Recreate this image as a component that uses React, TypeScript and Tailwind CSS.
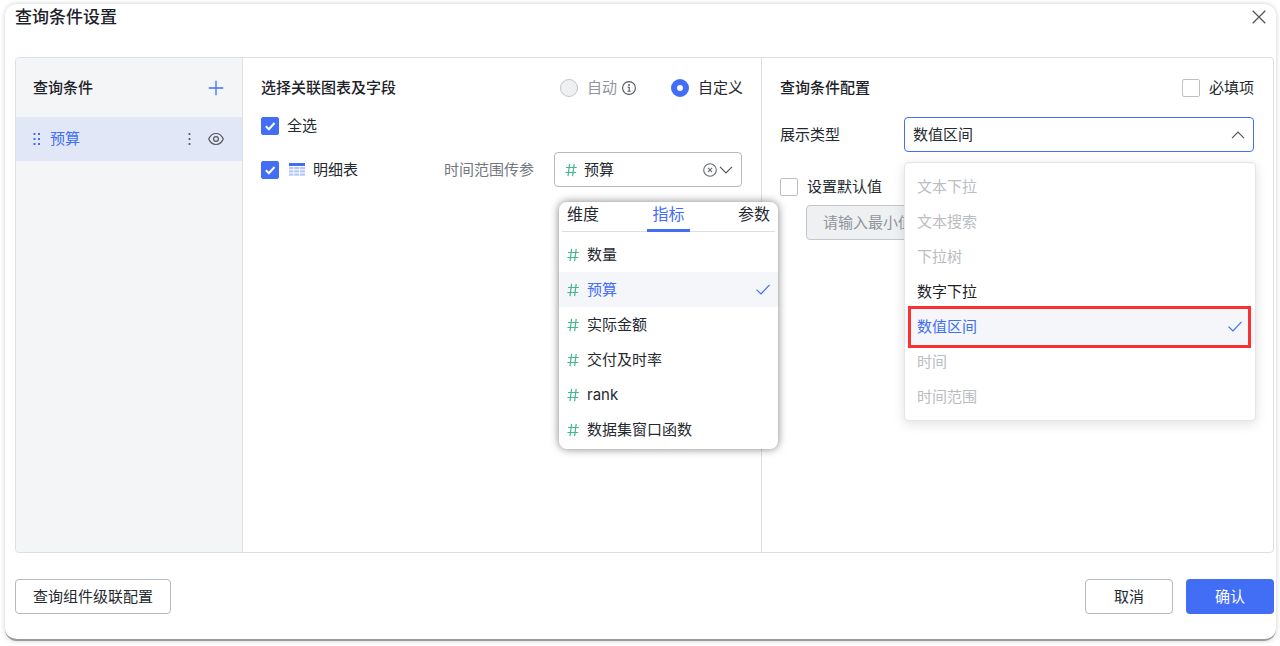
import { useState } from "react"

const typeOptions = [
    { label: "文本下拉", disabled: true },
    { label: "文本搜索", disabled: true },
    { label: "下拉树", disabled: true },
    { label: "数字下拉", disabled: false },
    { label: "数值区间", disabled: false },
    { label: "时间", disabled: true },
    { label: "时间范围", disabled: true },
]

const fields = ["数量", "预算", "实际金额", "交付及时率", "rank", "数据集窗口函数"]
const tabs = ["维度", "指标", "参数"]

function HashIcon() {
    return (
        <svg className="w-3 h-[14px] shrink-0" viewBox="0 0 12 14" fill="none" stroke="#45b594" strokeWidth="1.2">
            <path d="M4.6 .8 3 13.2M9.200 .8 7.600 13.2M1 4.500h10.800M.4 9.500h10.800" />
        </svg>
    )
}

function TickIcon() {
    return (
        <svg className="w-[14px] h-[11px] shrink-0" viewBox="0 0 14 11" fill="none" stroke="#426ef5" strokeWidth="1.2">
            <path d="M.5 5.6 5 10 13.5.8" />
        </svg>
    )
}

function Chevron({ up = false }) {
    return (
        <svg className="w-[14px] h-2" viewBox="0 0 14 8" fill="none" stroke="#51565d" strokeWidth="1.2">
            <path d={up ? "M1 7.2 7 1.2l6 6" : "M1 .8l6 6 6-6"} />
        </svg>
    )
}

function Checkbox({ id, checked = false }) {
    return (
        <span className="relative block w-[18px] h-[18px] shrink-0">
            <input
                id={id}
                type="checkbox"
                defaultChecked={checked}
                className="peer block appearance-none w-full h-full rounded-xs border border-[#bcbfc4] bg-white checked:border-[#426ef5] checked:bg-[#426ef5]"
            />
            <svg className="absolute inset-0 pointer-events-none opacity-0 peer-checked:opacity-100" viewBox="0 0 18 18" fill="none" stroke="#fff" strokeWidth="2">
                <path d="M4.8 9.2 7.9 12.2 13.5 6" />
            </svg>
        </span>
    )
}

export default function App() {
    const [mode, setMode] = useState("custom")
    const [tab, setTab] = useState("指标")
    const [field, setField] = useState("预算")
    const [type, setType] = useState("数值区间")

    const fieldRows = fields.map((name) => (
        <li key={name}>
            <button
                onClick={() => setField(name)}
                className={`flex items-center gap-2 w-full h-[35px] px-2 text-left ${name === field ? "bg-[#f4f6fa] text-[#426ef5]" : ""}`}
            >
                <HashIcon />
                <span className="flex-1">{name}</span>
                {name === field && <TickIcon />}
            </button>
        </li>
    ))

    const typeRows = typeOptions.map(({ label, disabled }) => (
        <li key={label} className="relative">
            <button
                disabled={disabled}
                onClick={() => setType(label)}
                className={`flex items-center justify-between w-full h-[35px] pl-3 pr-[13px] disabled:text-[#babdc2] ${label === type ? "bg-[#f4f6fa] text-[#426ef5]" : "text-[#1d2129]"}`}
            >
                {label}
                {label === type && <TickIcon />}
            </button>
            {label === "数值区间" && (
                <span className="absolute -top-[3px] -bottom-1 left-[3px] right-1 border-3 border-[#fb3030] pointer-events-none" />
            )}
        </li>
    ))

    return (
        <div className="bg-white pt-1 pb-1 pl-[5px] pr-1 font-['Inter','Noto_Sans_CJK_SC',sans-serif] text-[15px] leading-6 text-[#24292f]">
            <div className="flex flex-col rounded-xl border-b-2 border-[#9a9a9a] bg-white pl-[10px] pr-[2px] pb-[25px] shadow-[0_0_5px_rgba(0,0,0,0.2)]">
                <header className="flex items-center justify-between h-[26px] pr-2">
                    <h1 className="text-[17px] font-medium text-[#1d2129]">查询条件设置</h1>
                    <button aria-label="关闭">
                        <svg className="w-[14px] h-[14px]" viewBox="0 0 14 14" fill="none" stroke="#51565d" strokeWidth="1.3">
                            <path d="M.7.7l12.6 12.6M13.3.7.7 13.3" />
                        </svg>
                    </button>
                </header>

                <main className="flex mt-[27px] min-h-[496px] rounded-sm border border-[#dddfe3]">
                    {/* condition list */}
                    <aside className="w-[227px] shrink-0 rounded-l-sm border-r border-[#dddfe3] bg-[#f4f5f7]">
                        <div className="flex items-center justify-between h-[59px] pl-[17px] pr-[18px]">
                            <h2 className="font-medium text-[#1d2129]">查询条件</h2>
                            <button aria-label="添加">
                                <svg className="w-4 h-4" viewBox="0 0 16 16" fill="none" stroke="#426ef5" strokeWidth="1.3">
                                    <path d="M8 .7v14.6M.7 8h14.6" />
                                </svg>
                            </button>
                        </div>
                        <div className="flex items-center h-[44px] pl-[17px] pr-[18px] bg-[#e1e7f6] text-[#426ef5]">
                            <svg className="w-2 h-3" viewBox="0 0 8 12" fill="#426ef5">
                                {[0, 5, 10].map((y) => (
                                    <g key={y}>
                                        <rect x=".5" y={y} width="2" height="2" />
                                        <rect x="5" y={y} width="2" height="2" />
                                    </g>
                                ))}
                            </svg>
                            <span className="flex-1 pl-[9px]">预算</span>
                            <button aria-label="更多" className="pr-[17px]">
                                <svg className="w-[3px] h-[14px]" viewBox="0 0 3 14" fill="#51565d">
                                    <circle cx="1.5" cy="2" r="1.1" />
                                    <circle cx="1.5" cy="7" r="1.1" />
                                    <circle cx="1.5" cy="12" r="1.1" />
                                </svg>
                            </button>
                            <button aria-label="显示">
                                <svg className="w-4 h-[14px]" viewBox="0 0 16 14" fill="none" stroke="#51565d" strokeWidth="1.2">
                                    <path d="M.7 7C2.2 3.6 4.8 1.5 8 1.5S13.8 3.6 15.3 7c-1.5 3.4-4.1 5.5-7.3 5.5S2.2 10.4.7 7z" />
                                    <circle cx="8" cy="7" r="2.4" />
                                </svg>
                            </button>
                        </div>
                    </aside>

                    {/* linked charts and fields */}
                    <section className="flex-1 border-r border-[#dddfe3] pl-[18px] pr-[18px]">
                        <div className="flex items-center justify-between h-[59px]">
                            <h2 className="font-medium text-[#1d2129]">选择关联图表及字段</h2>
                            <div className="flex items-center">
                                <input
                                    id="auto"
                                    type="radio"
                                    name="mode"
                                    checked={mode === "auto"}
                                    onChange={() => setMode("auto")}
                                    className="appearance-none w-[18px] h-[18px] rounded-full border border-[#c3c6ca] bg-[#eff0f1] checked:border-6 checked:border-[#426ef5] checked:bg-white"
                                />
                                <label htmlFor="auto" className="pl-[9px] text-[#8f959e]">自动</label>
                                <svg className="ml-[5px] w-[14px] h-[14px]" viewBox="0 0 14 14" fill="none" stroke="#51565d" strokeWidth="1.1">
                                    <circle cx="7" cy="7" r="6.4" />
                                    <path d="M5.6 6.200h1.600v4M5.500 10.200h3.200" />
                                    <circle cx="7" cy="3.9" r=".4" fill="#51565d" />
                                </svg>
                                <input
                                    id="custom"
                                    type="radio"
                                    name="mode"
                                    checked={mode === "custom"}
                                    onChange={() => setMode("custom")}
                                    className="ml-[35px] appearance-none w-[18px] h-[18px] rounded-full border border-[#c3c6ca] bg-[#eff0f1] checked:border-6 checked:border-[#426ef5] checked:bg-white"
                                />
                                <label htmlFor="custom" className="pl-[9px]">自定义</label>
                            </div>
                        </div>
                        <div className="flex items-center gap-2 h-[18px]">
                            <Checkbox id="all" checked />
                            <label htmlFor="all">全选</label>
                        </div>
                        <div className="flex items-center mt-[17px] h-[35px]">
                            <Checkbox id="detail" checked />
                            <label htmlFor="detail" className="flex items-center gap-2 pl-[10px]">
                                <svg className="w-4 h-[13px]" viewBox="0 0 16 13">
                                    <path fill="#426ef5" d="M0 0h16v3H0z" />
                                    <path fill="#b5c6fb" d="M0 4h4.4v2.300H0zM5.200 4h5v2.300h-5zM11 4h5v2.300h-5zM0 7.200h4.400v2.300H0zM5.200 7.200h5v2.300h-5zM11 7.200h5v2.300h-5zM0 10.400h4.400v2.300H0zM5.200 10.400h5v2.300h-5zM11 10.400h5v2.300h-5z" />
                                </svg>
                                明细表
                            </label>
                            <label htmlFor="field" className="ml-auto pr-5 text-[#73777e]">时间范围传参</label>
                            <div className="relative mr-[1px] w-[188px]">
                                <select
                                    id="field"
                                    value={field}
                                    onChange={(e) => setField(e.target.value)}
                                    className="block appearance-none w-full h-[35px] pl-[29px] rounded-sm border border-[#b5b9c0] bg-white"
                                >
                                    {fields.map((name) => <option key={name}>{name}</option>)}
                                </select>
                                <div className="absolute inset-0 flex items-center justify-between pl-[11px] pr-[9px] pointer-events-none">
                                    <HashIcon />
                                    <span className="flex items-center gap-[2px]">
                                        <svg className="w-[14px] h-[14px]" viewBox="0 0 14 14" fill="none" stroke="#666b72" strokeWidth="1.1">
                                            <circle cx="7" cy="7" r="6.3" />
                                            <path d="M4.9 4.9l4.2 4.2M9.1 4.9 4.9 9.1" />
                                        </svg>
                                        <Chevron />
                                    </span>
                                </div>

                                <div className="absolute z-10 top-[50px] left-[5px] w-[219px] rounded-lg bg-white pb-[2px] shadow-[0_0_8px_rgba(0,0,0,0.5)]">
                                    <div className="flex justify-between mx-[3px] h-[30px] mb-[5px] border-b border-[#dddfe3]">
                                        {tabs.map((name) => (
                                            <button
                                                key={name}
                                                onClick={() => setTab(name)}
                                                className={`h-[30px] px-[5px] pb-[3px] border-b-3 text-base leading-6 ${name === tab ? "border-[#426ef5] text-[#426ef5]" : "border-transparent"}`}
                                            >
                                                {name}
                                            </button>
                                        ))}
                                    </div>
                                    <ul>{fieldRows}</ul>
                                </div>
                            </div>
                        </div>
                    </section>

                    {/* condition config */}
                    <section className="w-[511px] shrink-0 pl-[18px] pr-[19px]">
                        <div className="flex items-center justify-between h-[59px]">
                            <h2 className="font-medium text-[#1d2129]">查询条件配置</h2>
                            <div className="flex items-center gap-[9px]">
                                <Checkbox id="required" />
                                <label htmlFor="required">必填项</label>
                            </div>
                        </div>
                        <div className="flex items-center justify-between">
                            <label htmlFor="type">展示类型</label>
                            <div className="relative w-[350px]">
                                <select
                                    id="type"
                                    value={type}
                                    onChange={(e) => setType(e.target.value)}
                                    className="block appearance-none w-full h-[35px] pl-2 rounded-sm border border-[#426ef5] bg-white outline-none"
                                >
                                    {typeOptions.map(({ label, disabled }) => (
                                        <option key={label} disabled={disabled}>{label}</option>
                                    ))}
                                </select>
                                <div className="absolute inset-y-0 right-[9px] flex items-center pointer-events-none">
                                    <Chevron up />
                                </div>
                                <ul className="absolute z-10 top-[45px] left-0 w-[352px] py-[6px] rounded-sm border border-[#e3e5ea] bg-white shadow-[0_3px_12px_rgba(0,0,0,0.12)]">
                                    {typeRows}
                                </ul>
                            </div>
                        </div>
                        <div className="flex items-center gap-[9px] mt-[26px] h-[18px]">
                            <Checkbox id="default" />
                            <label htmlFor="default">设置默认值</label>
                        </div>
                        <input
                            aria-label="最小值"
                            placeholder="请输入最小值"
                            disabled
                            className="block mt-[9px] ml-[26px] w-[200px] h-[35px] px-4 rounded-sm border border-[#c3c6ca] bg-[#eff0f1] placeholder:text-[#8f959e]"
                        />
                    </section>
                </main>

                <footer className="flex items-center gap-[13px] mt-[26px]">
                    <button className="h-[35px] px-[17px] mr-auto rounded-sm border border-[#b5b9c0]">查询组件级联配置</button>
                    <button className="h-[35px] w-[88px] rounded-sm border border-[#b5b9c0]">取消</button>
                    <button className="h-[35px] w-[88px] rounded-sm bg-[#426ef5] text-white">确认</button>
                </footer>
            </div>
        </div>
    )
}
